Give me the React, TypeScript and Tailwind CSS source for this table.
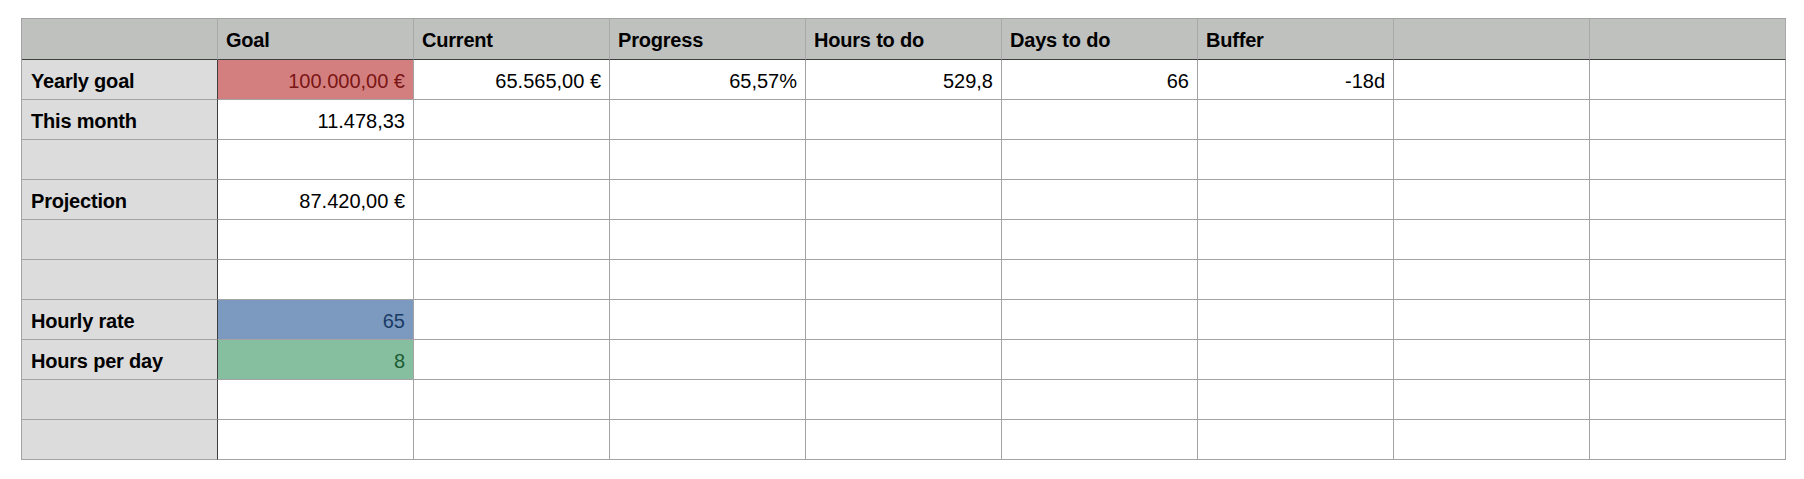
import React from "react";

type Cell = { text?: string; tone?: "red" | "blue" | "green" };

const headers = ["", "Goal", "Current", "Progress", "Hours to do", "Days to do", "Buffer", "", ""];

const rows: { label: string; cells: Cell[] }[] = [
  {
    label: "Yearly goal",
    cells: [
      { text: "100.000,00 €", tone: "red" },
      { text: "65.565,00 €" },
      { text: "65,57%" },
      { text: "529,8" },
      { text: "66" },
      { text: "-18d" },
      {},
      {},
    ],
  },
  { label: "This month", cells: [{ text: "11.478,33" }, {}, {}, {}, {}, {}, {}, {}] },
  { label: "", cells: [{}, {}, {}, {}, {}, {}, {}, {}] },
  { label: "Projection", cells: [{ text: "87.420,00 €" }, {}, {}, {}, {}, {}, {}, {}] },
  { label: "", cells: [{}, {}, {}, {}, {}, {}, {}, {}] },
  { label: "", cells: [{}, {}, {}, {}, {}, {}, {}, {}] },
  { label: "Hourly rate", cells: [{ text: "65", tone: "blue" }, {}, {}, {}, {}, {}, {}, {}] },
  { label: "Hours per day", cells: [{ text: "8", tone: "green" }, {}, {}, {}, {}, {}, {}, {}] },
  { label: "", cells: [{}, {}, {}, {}, {}, {}, {}, {}] },
  { label: "", cells: [{}, {}, {}, {}, {}, {}, {}, {}] },
];

function toneClass(tone?: Cell["tone"]) {
  if (tone === "red") return "bg-[#d47f7f] text-[#7a1515]";
  if (tone === "blue") return "bg-[#7c9abf] text-[#1a3a66]";
  if (tone === "green") return "bg-[#85bf9f] text-[#1c5c33]";
  return "bg-white text-black";
}

export default function App() {
  return (
    <div
      className="w-[1804px] h-[479px] overflow-hidden bg-white pt-[18px] pl-[21px]"
      style={{ fontFamily: '"Liberation Sans", Arial, Helvetica, sans-serif' }}
    >
      <div className="inline-flex flex-col border-l border-t border-[#a3a3a3] text-[20px] leading-none">
        <div className="flex">
          {headers.map((h, i) => (
            <div
              key={i}
              className="w-[196px] h-[41px] flex items-center pl-[8px] pt-[2px] font-bold tracking-[-0.2px] bg-[#bfc1bf] border-r border-r-[#a8a8a8] border-b border-b-[#3f3f3f] text-black"
            >
              {h}
            </div>
          ))}
        </div>
        {rows.map((r, ri) => (
          <div key={ri} className="flex">
            <div className="w-[196px] h-[40px] flex items-center pl-[9px] pt-[2px] font-bold tracking-[-0.2px] bg-[#dcdcdc] border-r border-r-[#3f3f3f] border-b border-b-[#a3a3a3] text-black">
              {r.label}
            </div>
            {r.cells.map((c, ci) => (
              <div
                key={ci}
                className={`w-[196px] h-[40px] flex items-center justify-end pr-[8px] pt-[2px] border-r border-b border-[#a3a3a3] ${toneClass(c.tone)}`}
              >
                {c.text}
              </div>
            ))}
          </div>
        ))}
      </div>
    </div>
  );
}
